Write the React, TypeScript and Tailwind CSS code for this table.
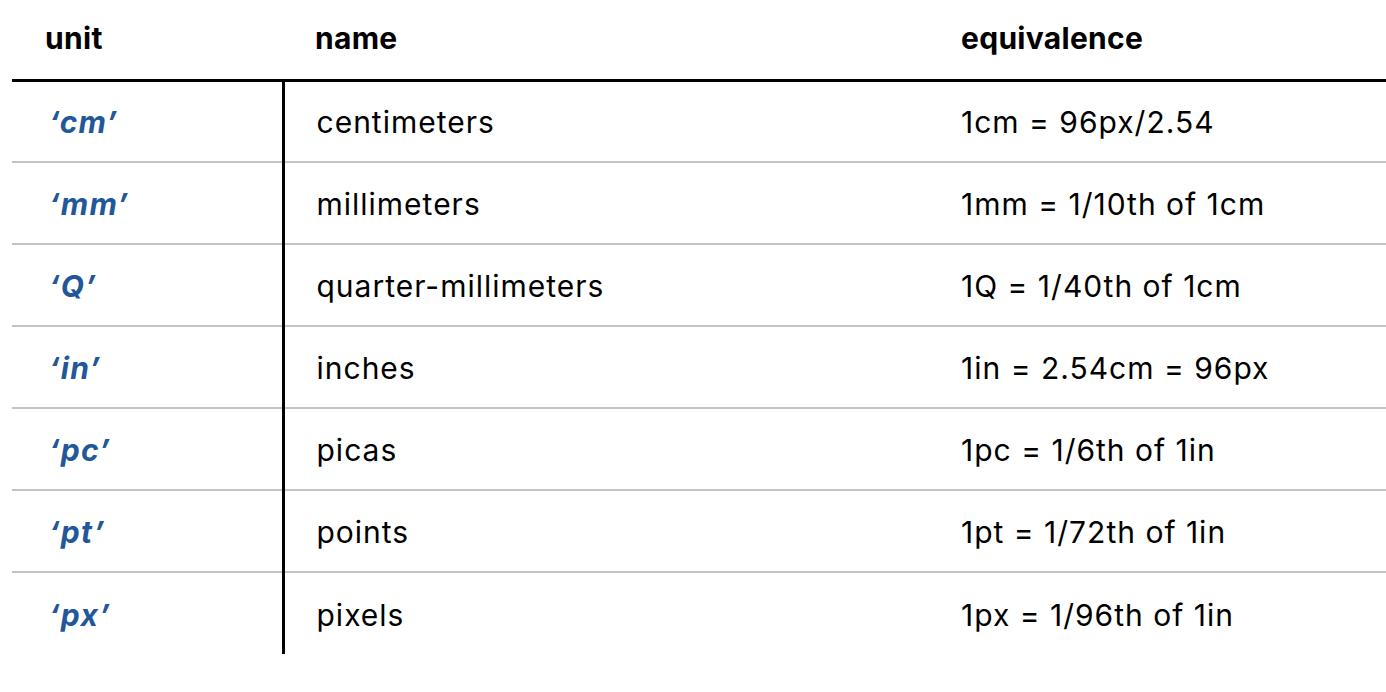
import React from 'react';

const rows: [string, string, string][] = [
  ['cm', 'centimeters', '1cm = 96px/2.54'],
  ['mm', 'millimeters', '1mm = 1/10th of 1cm'],
  ['Q', 'quarter-millimeters', '1Q = 1/40th of 1cm'],
  ['in', 'inches', '1in = 2.54cm = 96px'],
  ['pc', 'picas', '1pc = 1/6th of 1in'],
  ['pt', 'points', '1pt = 1/72th of 1in'],
  ['px', 'pixels', '1px = 1/96th of 1in'],
];

export default function App() {
  return (
    <div className="w-[1386px] h-[692px] bg-white pl-[12px] text-[30px] text-black [font-family:Inter,'Liberation_Sans',sans-serif]">
      <table className="table-fixed border-collapse w-[1374px]">
        <colgroup>
          <col className="w-[271px]" />
          <col className="w-[646px]" />
          <col />
        </colgroup>
        <thead>
          <tr className="h-[80px]">
            <th className="text-left font-bold pl-[33px] pb-px tracking-[0.3px] border-b-[3px] border-black">unit</th>
            <th className="text-left font-bold pl-[32px] pb-px tracking-[0.3px] border-b-[3px] border-black">name</th>
            <th className="text-left font-bold pl-[32px] pb-px tracking-[0.3px] border-b-[3px] border-black">equivalence</th>
          </tr>
        </thead>
        <tbody>
          {rows.map(([u, n, e], i) => {
            const last = i === rows.length - 1;
            const line = last ? '' : 'border-b-2 border-b-[#c4c4c4]';
            return (
              <tr key={u} className="h-[82px]">
                <td className={`pl-[37px] pt-[3px] font-bold italic tracking-[1.3px] text-[#22589a] border-r-[3px] border-r-black ${line}`}>
                  {'\u2018' + u + '\u2019'}
                </td>
                <td className={`pl-[32px] pt-[3px] tracking-[1px] ${line}`}>{n}</td>
                <td className={`pl-[32px] pt-[3px] tracking-[1px] ${line}`}>{e}</td>
              </tr>
            );
          })}
        </tbody>
      </table>
    </div>
  );
}
